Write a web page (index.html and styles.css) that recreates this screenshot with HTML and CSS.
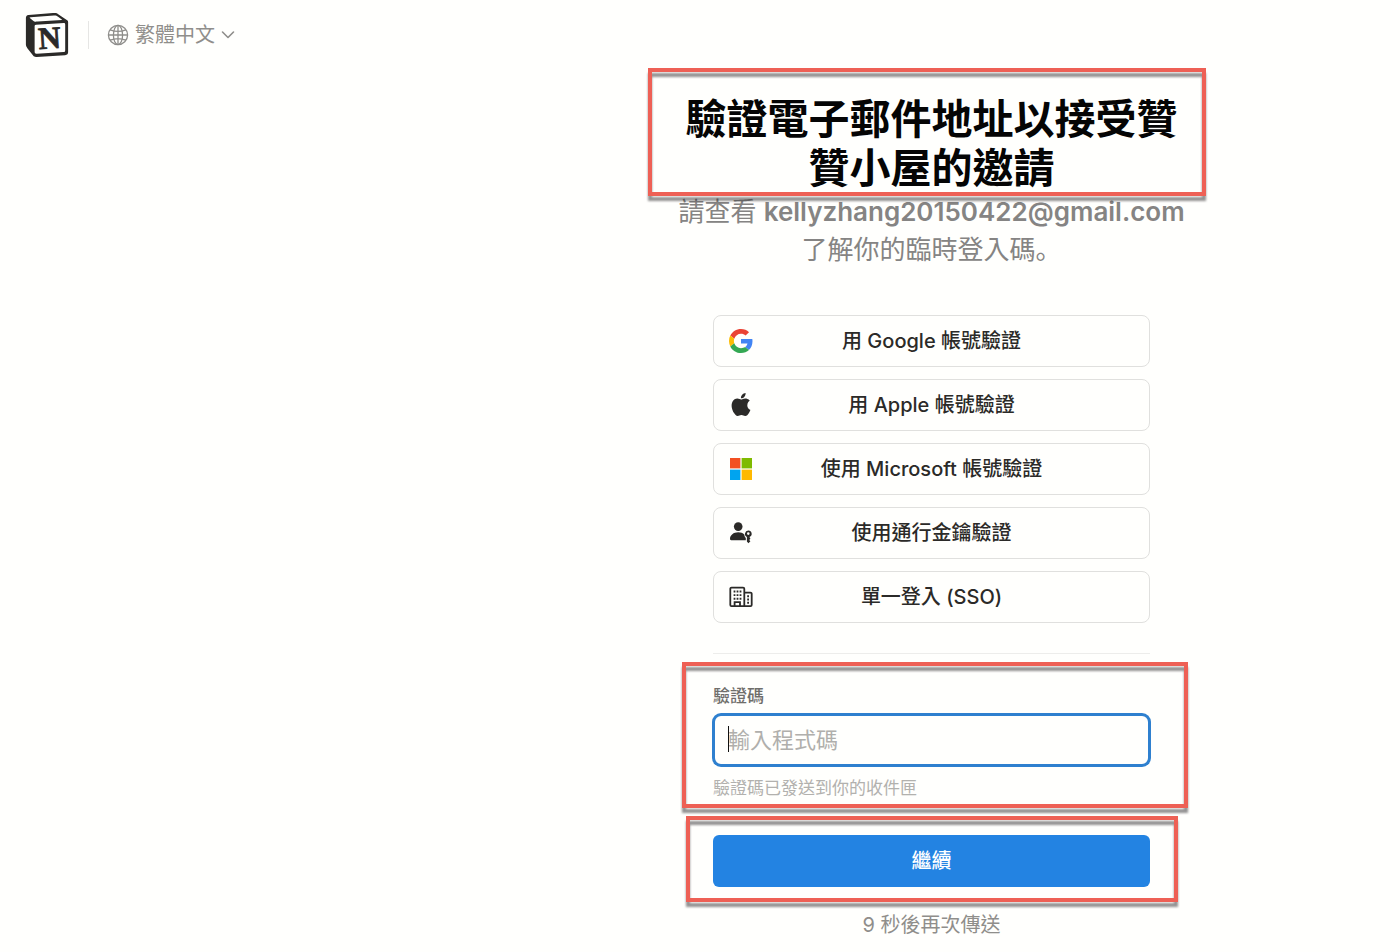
FILE: index.html
```html
<!DOCTYPE html>
<html lang="zh-Hant">
<head>
<meta charset="utf-8">
<meta name="viewport" content="width=device-width, initial-scale=1">
<title>Notion</title>
<link rel="stylesheet" href="styles.css">
</head>
<body>
<header class="topbar">
  <a class="logo" href="#" aria-label="Notion">
    <svg viewBox="0 0 24 24" width="44" height="44" aria-hidden="true">
      <path fill="#2b2a28" fill-rule="evenodd" d="M4.459 4.208c.746.606 1.026.56 2.428.466l13.215-.793c.28 0 .047-.28-.046-.326L17.86 1.968c-.42-.326-.981-.7-2.055-.607L3.01 2.295c-.466.046-.56.28-.374.466zm.793 3.08v13.904c0 .747.373 1.027 1.214.98l14.523-.84c.841-.046.935-.56.935-1.167V6.354c0-.606-.233-.933-.748-.887l-15.177.887c-.56.047-.747.327-.747.933zM1.936 1.035l13.31-.98c1.634-.14 2.055-.047 3.082.7l4.249 2.986c.7.513.934.653.934 1.213v16.378c0 1.026-.373 1.634-1.68 1.726l-15.458.934c-.98.047-1.448-.093-1.962-.747l-3.129-4.06c-.56-.747-.793-1.306-.793-1.96V2.667c0-.839.374-1.54 1.447-1.632z"/>
      <text class="logo-letter" x="13.4" y="19.4" text-anchor="middle" transform="rotate(-4 13.4 14)">N</text>
    </svg>
  </a>
  <div class="language">
    <svg viewBox="0 0 22 22" width="22" height="22" fill="none" stroke="currentColor" stroke-width="1.3" aria-hidden="true">
      <circle cx="11" cy="11" r="9.6"/><ellipse cx="11" cy="11" rx="4.6" ry="9.6"/>
      <path d="M11 1.4v19.2M1.4 11h19.2M3.2 5.8c4.6 1.9 11 1.9 15.6 0M3.2 16.2c4.6-1.9 11-1.9 15.6 0"/>
    </svg>
    <select class="language-select" aria-label="語言"><option>繁體中文</option></select>
    <svg class="chevron" viewBox="0 0 14 10" width="14" height="10" fill="none" stroke="currentColor" stroke-width="1.6" stroke-linecap="round" stroke-linejoin="round" aria-hidden="true"><path d="M1.5 2 7 7.5 12.5 2"/></svg>
  </div>
</header>

<main class="page">
  <div class="intro">
    <h1 class="title marked mark-title">驗證電子郵件地址以接受贊贊小屋的邀請</h1>
    <p class="subtitle">請查看 <strong>kellyzhang20150422@gmail.com</strong><br>了解你的臨時登入碼<span class="stop" lang="zh-Hans">。</span></p>
  </div>

  <div class="column">
    <div class="providers">
      <button type="button" class="provider">
        <svg class="provider-icon" viewBox="0 0 48 48" width="24" height="24" aria-hidden="true">
          <path fill="#ea4335" d="M24 9.5c3.54 0 6.71 1.22 9.21 3.6l6.85-6.85C35.9 2.38 30.47 0 24 0 14.62 0 6.51 5.38 2.56 13.22l7.98 6.19C12.43 13.72 17.74 9.5 24 9.5z"/>
          <path fill="#4285f4" d="M46.98 24.55c0-1.57-.15-3.09-.38-4.55H24v9.02h12.94c-.58 2.96-2.26 5.48-4.78 7.18l7.73 6c4.51-4.18 7.09-10.36 7.09-17.65z"/>
          <path fill="#fbbc05" d="M10.53 28.59c-.48-1.45-.76-2.99-.76-4.59s.27-3.14.76-4.59l-7.98-6.19C.92 16.46 0 20.12 0 24c0 3.88.92 7.54 2.56 10.78l7.97-6.19z"/>
          <path fill="#34a853" d="M24 48c6.48 0 11.93-2.13 15.89-5.81l-7.73-6c-2.15 1.45-4.92 2.3-8.16 2.3-6.26 0-11.57-4.22-13.47-9.91l-7.98 6.19C6.51 42.62 14.62 48 24 48z"/>
        </svg>
        <span>用 Google 帳號驗證</span>
      </button>
      <button type="button" class="provider">
        <svg class="provider-icon" viewBox="-0.5 0 25 25" width="24" height="24" aria-hidden="true">
          <path fill="#2b2a28" d="M12.152 6.896c-.948 0-2.415-1.078-3.96-1.04-2.04.027-3.91 1.183-4.961 3.014-2.117 3.675-.546 9.103 1.519 12.09 1.013 1.454 2.208 3.09 3.792 3.039 1.52-.065 2.09-.987 3.935-.987 1.831 0 2.35.987 3.96.948 1.637-.026 2.676-1.48 3.676-2.948 1.156-1.688 1.636-3.325 1.662-3.415-.039-.013-3.182-1.221-3.22-4.857-.026-3.04 2.48-4.494 2.597-4.559-1.429-2.09-3.623-2.324-4.39-2.376-2-.156-3.675 1.09-4.61 1.09zM15.53 3.83c.843-1.012 1.4-2.427 1.245-3.83-1.207.052-2.662.805-3.532 1.818-.78.896-1.454 2.338-1.273 3.714 1.338.104 2.715-.688 3.559-1.701"/>
        </svg>
        <span>用 Apple 帳號驗證</span>
      </button>
      <button type="button" class="provider">
        <svg class="provider-icon" viewBox="0 0 24 24" width="24" height="24" aria-hidden="true">
          <path fill="#f25022" d="M1 1h10.400v10.400H1z"/><path fill="#7fba00" d="M12.600 1H23v10.400H12.600z"/><path fill="#00a4ef" d="M1 12.600h10.400V23H1z"/><path fill="#ffb900" d="M12.600 12.600H23V23H12.600z"/>
        </svg>
        <span>使用 Microsoft 帳號驗證</span>
      </button>
      <button type="button" class="provider">
        <svg class="provider-icon" viewBox="0 0 24 24" width="24" height="24" fill="#2b2a28" aria-hidden="true">
          <circle cx="9.200" cy="5.600" r="4.300"/>
          <path d="M1 18c0-4 3.600-6.800 8.200-6.800 2.600 0 4.700.8 6.100 2.300.1 1.500.6 2.700 1.500 3.500v2.200H2.200c-.8 0-1.200-.4-1.200-1.200z"/>
          <path fill-rule="evenodd" d="M19.300 9.600a3.300 3.300 0 0 0-1.400 6.300v4.700l1.500 1.600 2-2-1.200-1.200 1.200-1.200-.9-1.800a3.300 3.300 0 0 0-1.200-6.400zm0 1.700a1.300 1.300 0 1 1 0 2.600 1.300 1.300 0 0 1 0-2.600z"/>
        </svg>
        <span>使用通行金鑰驗證</span>
      </button>
      <button type="button" class="provider">
        <svg class="provider-icon" viewBox="0 0 24 24" width="24" height="24" fill="none" stroke="#2b2a28" stroke-width="1.800" aria-hidden="true">
          <path d="M15.300 21.200H2.500a1.200 1.200 0 0 1-1.200-1.200V3.800a1.200 1.200 0 0 1 1.200-1.200h11.600a1.200 1.200 0 0 1 1.200 1.200zM15.300 7.600h6.200a1.200 1.200 0 0 1 1.200 1.200V20a1.200 1.200 0 0 1-1.200 1.200h-6.200M5.600 21v-3.800h5.400V21"/>
          <path stroke-width="1.900" d="M4.600 6.500h1.800M7.600 6.500h1.800M10.600 6.500h1.800M4.600 10.100h1.800M7.600 10.100h1.800M10.600 10.100h1.800M4.600 13.700h1.800M7.600 13.700h1.800M10.600 13.700h1.800M18.200 11.200H20M18.200 14.500H20M18.200 17.800H20"/>
        </svg>
        <span>單一登入 (SSO)</span>
      </button>
    </div>

    <hr class="divider">

    <form class="form">
      <div class="field marked mark-field">
        <label class="label" for="code">驗證碼</label>
        <div class="input-wrap">
          <input class="input" id="code" type="text" placeholder="輸入程式碼" aria-describedby="code-hint">
          <span class="caret"></span>
        </div>
        <p class="hint" id="code-hint">驗證碼已發送到你的收件匣</p>
      </div>
      <div class="marked mark-submit">
        <button type="submit" class="submit">繼續</button>
      </div>
      <p class="resend">9 秒後再次傳送</p>
    </form>
  </div>
</main>
</body>
</html>
```
FILE: styles.css
```css
* {
  box-sizing: border-box;
}

body {
  margin: 0;
  background: #fffffd;
  color: #2b2a28;
  font-family: Inter, "Noto Sans CJK TC", sans-serif;
  font-size: 20px;
  line-height: 28px;
}

h1,
p {
  margin: 0;
}

.topbar {
  display: flex;
  align-items: center;
  height: 70px;
  padding: 0 25px;
}

.logo {
  display: flex;
  padding-right: 19px;
}

.logo-letter {
  fill: #2b2a28;
  stroke: #2b2a28;
  stroke-width: 0.4px;
  font-family: "Liberation Serif", serif;
  font-size: 17px;
  font-weight: 700;
}

.language {
  display: flex;
  align-items: center;
  gap: 6px;
  padding-left: 18px;
  border-left: 1px solid #e6e6e4;
  color: #8f8e8b;
}

.language-select {
  appearance: none;
  padding: 0;
  border: 0;
  background: none;
  color: inherit;
  font: inherit;
}

.page {
  display: flex;
  flex-direction: column;
  align-items: center;
  padding: 25px 0 12px 463px;
}

.intro {
  max-width: 516px;
  text-align: center;
}

.title {
  color: #050505;
  font-size: 41px;
  font-weight: 600;
  line-height: 49px;
}

.subtitle {
  color: #858483;
  font-size: 26px;
  line-height: 38px;
}

.subtitle strong {
  font-weight: 600;
}

.stop {
  font-family: "Noto Sans CJK SC", sans-serif;
  line-height: 1;
}

.column {
  width: 437px;
  max-width: 100%;
  padding-top: 46px;
}

.providers {
  display: flex;
  flex-direction: column;
  gap: 12px;
}

.provider {
  position: relative;
  height: 52px;
  border: 1px solid #e0e0de;
  border-radius: 8px;
  background: transparent;
  color: inherit;
  font: inherit;
  font-weight: 500;
}

.provider-icon {
  position: absolute;
  top: 13px;
  left: 15px;
}

.divider {
  height: 1px;
  margin: 30px 0 28px;
  border: 0;
  background: #ededeb;
}

.form {
  display: flex;
  flex-direction: column;
}

.label {
  display: block;
  padding-bottom: 4px;
  color: #6f6e6b;
  font-size: 17px;
  font-weight: 500;
}

.input-wrap {
  position: relative;
}

.input {
  display: block;
  width: 100%;
  height: 52px;
  padding: 0 13px;
  border: 2px solid #2f80cf;
  border-radius: 8px;
  outline: 0;
  background: #fffffd;
  box-shadow: 0 0 0 1px #2f80cf;
  color: inherit;
  font: inherit;
  font-size: 22px;
}

.input::placeholder {
  color: #b0afac;
  opacity: 1;
}

.caret {
  position: absolute;
  top: 12px;
  left: 15px;
  width: 1px;
  height: 26px;
  background: #111;
}

.hint {
  padding-top: 8px;
  color: #b2b1ae;
  font-size: 17px;
}

.submit {
  display: block;
  width: 100%;
  height: 52px;
  border: 0;
  border-radius: 6px;
  background: #2383e2;
  color: #fff;
  font: inherit;
  font-weight: 500;
}

.mark-submit {
  margin-top: 33px;
}

.resend {
  padding-top: 24px;
  color: #8f8e8b;
  text-align: center;
}

/* Red callout frames laid over the parts that need attention */
.marked {
  position: relative;
}

.marked::after {
  content: "";
  position: absolute;
  border: 4px solid #ee6055;
  filter: drop-shadow(0 5px 1px rgba(40, 36, 40, 0.5));
  pointer-events: none;
}

.mark-title::after {
  inset: -27px -16px -3px -26px;
}

.mark-field::after {
  inset: -20px -38px -6px -31px;
}

.mark-submit::after {
  inset: -19px -28px -15px -27px;
}
```
